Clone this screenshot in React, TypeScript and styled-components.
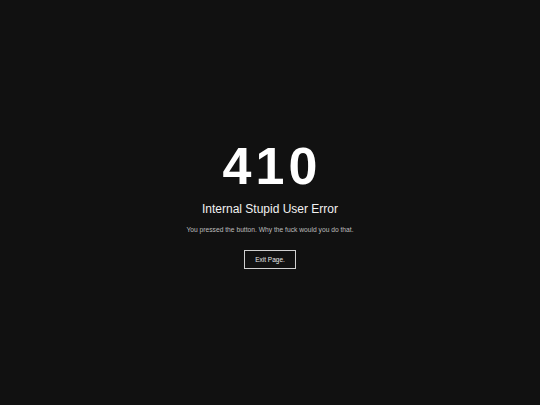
import React from "react";
import styled, { createGlobalStyle } from "styled-components";

const Global = createGlobalStyle`
  html, body { margin: 0; padding: 0; background: #111111; }
  body { font-family: "Liberation Sans", Arial, sans-serif; }
`;

const Page = styled.main`
  height: 405px;
  display: flex;
  flex-direction: column;
  align-items: center;
  justify-content: flex-start;
  padding-top: 136px;
  box-sizing: border-box;
  color: #ffffff;
  text-align: center;
`;

const Code = styled.h1`
  margin: 0;
  font-size: 52px;
  font-weight: 700;
  line-height: 60px;
  letter-spacing: 4px;
  margin-right: -4px;
`;

const Title = styled.h2`
  margin: 5px 0 0;
  font-size: 12px;
  font-weight: 400;
  line-height: 16px;
  color: #f2f2f2;
`;

const Message = styled.p`
  margin: 8px 0 0;
  font-size: 6.7px;
  line-height: 10px;
  color: #bdbdbd;
`;

const Button = styled.button`
  margin-top: 15px;
  width: 52px;
  height: 19px;
  padding: 0;
  background: transparent;
  border: 1px solid #d0d0d0;
  color: #e8e8e8;
  font-family: "Liberation Sans", Arial, sans-serif;
  font-size: 6.5px;
  cursor: pointer;
`;

export default function App() {
  return (
    <>
      <Global />
      <Page>
        <Code>410</Code>
        <Title>Internal Stupid User Error</Title>
        <Message>You pressed the button. Why the fuck would you do that.</Message>
        <Button>Exit Page.</Button>
      </Page>
    </>
  );
}
